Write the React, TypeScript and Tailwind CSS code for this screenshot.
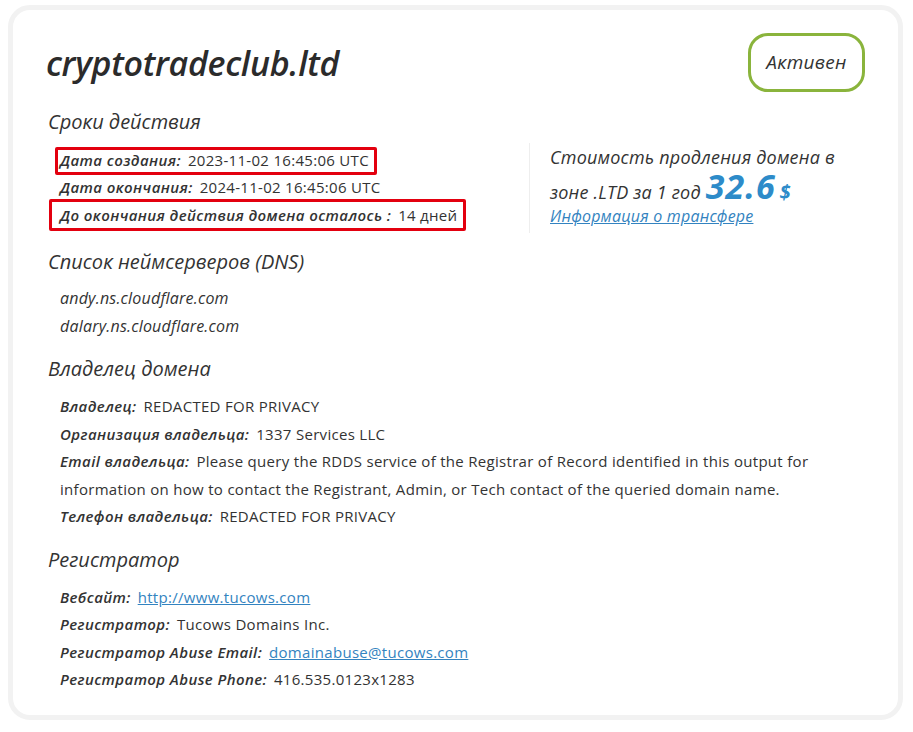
import React from "react";

const head = "font-['Open_Sans',sans-serif] italic";
const val = "font-['Open_Sans',sans-serif] not-italic";

function Row({ label, children, box }: { label: string; children: React.ReactNode; box?: string }) {
  return (
    <div className="relative w-fit">
      {box && <span className={`absolute border-[3px] border-[#e3000f] rounded-[2px] ${box}`} />}
      <span className={`${head} font-semibold tracking-[0.4px]`}>{label}</span>
      <span className={`${val} ml-[7px] tracking-[0.3px]`}>{children}</span>
    </div>
  );
}

function Heading({ children }: { children: React.ReactNode }) {
  return <h2 className={`${head} text-[20px] leading-[28px] text-[#333]`}>{children}</h2>;
}

export default function App() {
  return (
    <div className="bg-white min-h-screen pt-[5px] pl-[8px] pr-[10px] text-[#333]">
      <div className="rounded-[22px] border-[5px] border-[#f2f2f2] pl-[35px] pr-[33px] pt-[23px] pb-[20px] h-[715px]">
        <div className="flex items-center justify-between h-[59px]">
          <h1 className={`${head} font-semibold text-[34px] leading-[40px] -ml-[2px] tracking-[-0.3px] text-[#2b2b2b]`}>
            cryptotradeclub.ltd
          </h1>
          <div className={`${head} font-medium text-[19px] tracking-[0.3px] border-[3px] border-[#8ab43c] rounded-[20px] h-[59px] w-[117px] flex items-center justify-center`}>
            Активен
          </div>
        </div>

        <div className="mt-[16px]">
          <Heading>Сроки действия</Heading>
          <div className="flex items-start mt-[7px]">
            <div className="w-[481px] pl-[12px] pt-[3.5px] text-[15px] leading-[27.5px]">
              <Row label="Дата создания:" box="-left-[5px] -right-[8px] top-[0px] bottom-[-1px]">
                2023-11-02 16:45:06 UTC
              </Row>
              <Row label="Дата окончания:">2024-11-02 16:45:06 UTC</Row>
              <Row label="До окончания действия домена осталось :" box="-left-[11px] -right-[9px] -top-[3px] -bottom-[2px]">
                14 дней
              </Row>
            </div>
            <div className="border-l border-[#eeeeee] pl-[20px] pb-[4px] h-[90px]">
              <div className={`${head} font-medium text-[18px] leading-[28px] tracking-[0.2px]`}>
                Стоимость продления домена в
              </div>
              <div className={`${head} font-medium text-[18px] h-[31px] leading-[31px] tracking-[0.2px] flex items-baseline`}>
                <span>зоне .LTD за 1 год</span>
                <span className="ml-[5px] text-[34px] leading-[31px] font-bold text-[#2d8bc9] tracking-[1px]">32.6</span>
                <span className="ml-[4px] text-[20px] leading-[31px] font-bold text-[#2d8bc9]">$</span>
              </div>
              <a href="#" className={`${head} font-medium text-[16px] leading-[28px] tracking-[0.2px] text-[#3383c0] underline block`}>
                Информация о трансфере
              </a>
            </div>
          </div>
        </div>

        <div className="mt-[15px]">
          <Heading>Список неймсерверов (DNS)</Heading>
          <div className={`${head} font-medium pl-[12px] mt-[9px] text-[16px] leading-[27.5px] tracking-[0.2px]`}>
            <div>andy.ns.cloudflare.com</div>
            <div>dalary.ns.cloudflare.com</div>
          </div>
        </div>

        <div className="mt-[15px]">
          <Heading>Владелец домена</Heading>
          <div className="pl-[12px] mt-[10px] text-[15px] leading-[27.5px]">
            <Row label="Владелец:">REDACTED FOR PRIVACY</Row>
            <Row label="Организация владельца:">1337 Services LLC</Row>
            <div className="w-[760px]">
              <span className={`${head} font-semibold tracking-[0.4px]`}>Email владельца:</span>
              <span className={`${val} ml-[7px] tracking-[0.3px]`}>
                Please query the RDDS service of the Registrar of Record identified in this output for
                information on how to contact the Registrant, Admin, or Tech contact of the queried domain name.
              </span>
            </div>
            <Row label="Телефон владельца:">REDACTED FOR PRIVACY</Row>
          </div>
        </div>

        <div className="mt-[15px]">
          <Heading>Регистратор</Heading>
          <div className="pl-[12px] mt-[10px] text-[15px] leading-[27.5px]">
            <Row label="Вебсайт:">
              <a href="#" className="text-[#3383c0] underline">http://www.tucows.com</a>
            </Row>
            <Row label="Регистратор:">Tucows Domains Inc.</Row>
            <Row label="Регистратор Abuse Email:">
              <a href="#" className="text-[#3383c0] underline">domainabuse@tucows.com</a>
            </Row>
            <Row label="Регистратор Abuse Phone:">416.535.0123x1283</Row>
          </div>
        </div>
      </div>
    </div>
  );
}
